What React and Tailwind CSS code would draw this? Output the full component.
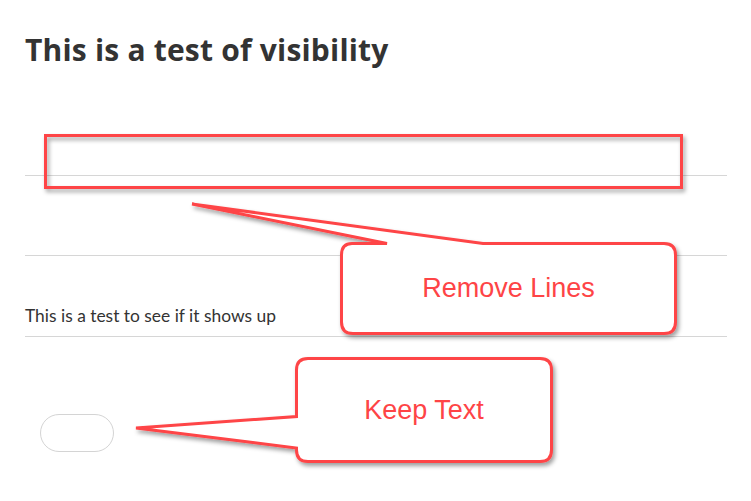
export default function App() {
  const red = "#fe4446";
  return (
    <div className="relative w-[751px] h-[501px] bg-white overflow-hidden" style={{ fontFamily: "Lato, sans-serif" }}>
      <div className="pl-[25px] w-[727px]">
        <h1 className="mt-[30px] h-[40px] text-[30px] leading-[40px] font-bold text-[#333333] tracking-[0.2px]" style={{ fontFamily: "'Open Sans', sans-serif" }}>
          This is a test of visibility
        </h1>
        <div className="h-[106px] border-b border-[#d6d6d6]" />
        <div className="h-[80px] border-b border-[#d6d6d6]" />
        <div className="h-[81px] border-b border-[#d6d6d6] flex items-end pb-[9px]">
          <p className="text-[17.4px] leading-[22px] text-[#333333]">This is a test to see if it shows up</p>
        </div>
        <div className="mt-[77px] ml-[15px] w-[74px] h-[38px] rounded-full border border-[#d4d4d4]" />
      </div>

      <svg className="absolute inset-0 pointer-events-none" width="751" height="501" viewBox="0 0 751 501">
        <defs>
          <filter id="sh" x="-10%" y="-10%" width="130%" height="150%">
            <feDropShadow dx="2" dy="3" stdDeviation="2" floodColor="#000" floodOpacity="0.38" />
          </filter>
        </defs>
        <rect x="45.5" y="135.5" width="636" height="52" fill="none" stroke={red} strokeWidth="3" filter="url(#sh)" />
        <path
          d="M352,243.5 L387,243.5 L192,204 L483,243.5 L664,243.5 Q675.5,243.5 675.5,255 L675.5,322 Q675.5,333.5 664,333.5 L353,333.5 Q341.5,333.5 341.5,322 L341.5,255 Q341.5,243.5 352,243.5 Z"
          fill="white"
          stroke={red}
          strokeWidth="3"
          strokeLinejoin="miter"
          filter="url(#sh)"
        />
        <path
          d="M308,358.5 L540,358.5 Q551.5,358.5 551.5,370 L551.5,450 Q551.5,461.5 540,461.5 L308,461.5 Q296.5,461.5 296.5,450 L296.5,448 L136,428 L296.5,416.5 L296.5,370 Q296.5,358.5 308,358.5 Z"
          fill="white"
          stroke={red}
          strokeWidth="3"
          filter="url(#sh)"
        />
      </svg>

      <div className="absolute left-[341px] top-[243px] w-[335px] h-[91px] flex items-center justify-center">
        <span className="text-[27px] leading-none text-[#fe4446]" style={{ fontFamily: "'Liberation Sans', Arial, sans-serif" }}>Remove Lines</span>
      </div>
      <div className="absolute left-[296px] top-[358px] w-[256px] h-[104px] flex items-center justify-center">
        <span className="text-[27px] leading-none text-[#fe4446]" style={{ fontFamily: "'Liberation Sans', Arial, sans-serif" }}>Keep Text</span>
      </div>
    </div>
  );
}
